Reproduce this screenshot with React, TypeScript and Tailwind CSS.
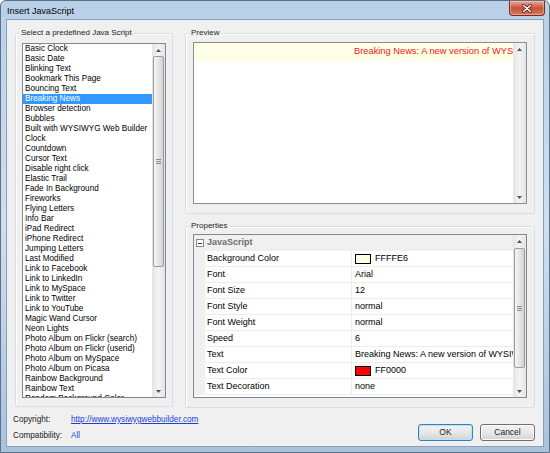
import React from "react";

const scripts = [
  "Basic Clock",
  "Basic Date",
  "Blinking Text",
  "Bookmark This Page",
  "Bouncing Text",
  "Breaking News",
  "Browser detection",
  "Bubbles",
  "Built with WYSIWYG Web Builder",
  "Clock",
  "Countdown",
  "Cursor Text",
  "Disable right click",
  "Elastic Trail",
  "Fade In Background",
  "Fireworks",
  "Flying Letters",
  "Info Bar",
  "iPad Redirect",
  "iPhone Redirect",
  "Jumping Letters",
  "Last Modified",
  "Link to Facebook",
  "Link to LinkedIn",
  "Link to MySpace",
  "Link to Twitter",
  "Link to YouTube",
  "Magic Wand Cursor",
  "Neon Lights",
  "Photo Album on Flickr (search)",
  "Photo Album on Flickr (userid)",
  "Photo Album on MySpace",
  "Photo Album on Picasa",
  "Rainbow Background",
  "Rainbow Text",
  "Random Background Color",
];

const properties: { name: string; value: string; swatch?: string }[] = [
  { name: "Background Color", value: "FFFFE6", swatch: "bg-[#ffffe6]" },
  { name: "Font", value: "Arial" },
  { name: "Font Size", value: "12" },
  { name: "Font Style", value: "normal" },
  { name: "Font Weight", value: "normal" },
  { name: "Speed", value: "6" },
  { name: "Text", value: "Breaking News: A new version of WYSIWYG Web Builder is available!" },
  { name: "Text Color", value: "FF0000", swatch: "bg-[#ff0000]" },
  { name: "Text Decoration", value: "none" },
];

function Arrow({ up }: { up?: boolean }) {
  return (
    <svg width="5" height="3" viewBox="0 0 5 3" className="block">
      <path d={up ? "M0 3 L2.5 0 L5 3 Z" : "M0 0 L2.5 3 L5 0 Z"} fill="#505050" />
    </svg>
  );
}

function ScrollBar({ thumb }: { thumb?: string }) {
  return (
    <div className="w-[13px] shrink-0 flex flex-col bg-gradient-to-r from-[#e4e4e4] via-[#f3f3f3] to-[#e4e4e4]">
      <div className="h-[12px] flex items-center justify-center">
        <Arrow up />
      </div>
      <div className="flex-1 flex flex-col">
        {thumb && (
          <div
            className={`mx-[1px] rounded-[2px] border border-[#9c9c9c] bg-gradient-to-r from-[#f6f6f6] via-[#e6e6e6] to-[#d2d2d2] flex items-center justify-center ${thumb}`}
          >
            <div className="flex flex-col gap-[1px]">
              <div className="w-[5px] h-px bg-[#8c8c8c]" />
              <div className="w-[5px] h-px bg-[#8c8c8c]" />
              <div className="w-[5px] h-px bg-[#8c8c8c]" />
            </div>
          </div>
        )}
      </div>
      <div className="h-[12px] flex items-center justify-center">
        <Arrow />
      </div>
    </div>
  );
}

function Group({ label, className, children }: { label: string; className: string; children: React.ReactNode }) {
  return (
    <div className={`relative border border-[#d5dfe5] rounded-[2px] shadow-[inset_1px_1px_0_#ffffff] ${className}`}>
      <span className="absolute -top-[6px] left-[3px] px-[2px] bg-[#f0f0f0] text-[8px] leading-[10px] text-[#1e1e1e]">
        {label}
      </span>
      {children}
    </div>
  );
}

function CloseButton() {
  return (
    <div className="w-[36px] h-[15px] rounded-b-[4px] border border-t-0 border-[#7a2b22] bg-gradient-to-b from-[#e9a999] via-[#c8513a] to-[#d9795e] shadow-[inset_0_0_0_1px_rgba(255,210,200,0.45)] flex items-center justify-center">
      <svg width="10" height="9" viewBox="0 0 10 9">
        <path d="M1.5 1.5 L8.5 7.5 M8.5 1.5 L1.5 7.5" stroke="#5a1d16" strokeWidth="3" strokeLinecap="round" />
        <path d="M1.5 1.5 L8.5 7.5 M8.5 1.5 L1.5 7.5" stroke="#ffffff" strokeWidth="1.6" strokeLinecap="round" />
      </svg>
    </div>
  );
}

function Button({ label, primary }: { label: string; primary?: boolean }) {
  return (
    <div
      className={`w-[55px] h-[17px] rounded-[3px] border flex items-center justify-center text-[8.5px] text-[#1e1e1e] bg-gradient-to-b from-[#f3f3f3] via-[#e8e8e8] to-[#d2d2d2] ${
        primary
          ? "border-[#3c7fb1] shadow-[inset_0_0_0_1px_#b8e2f8]"
          : "border-[#707070] shadow-[inset_0_0_0_1px_#fbfbfb]"
      }`}
    >
      {label}
    </div>
  );
}

export default function App() {
  return (
    <div className="w-[550px] h-[453px] flex flex-col overflow-hidden rounded-t-[6px] border border-[#5d7189] bg-gradient-to-b from-[#b9d0e9] via-[#cfdff1] to-[#a9c2de] font-['Liberation_Sans',Arial,sans-serif]">
      {/* title bar */}
      <div className="h-[18px] shrink-0 flex items-start justify-between pl-[6px] pr-[4px]">
        <span className="mt-[5px] text-[9px] leading-[10px] text-black">Insert JavaScript</span>
        <CloseButton />
      </div>

      {/* client area */}
      <div className="mx-[5px] h-[428px] shrink-0 flex flex-col bg-[#f0f0f0] border border-[#8aa1ba]">
        <div className="flex gap-[12px] pl-[8px] pr-[8px] pt-[13px]">
          <Group label="Select a predefined Java Script" className="w-[158px] h-[374px] pl-[6px] pt-[9px]">
            <div className="w-[144px] h-[355px] border border-[#828790] bg-white flex overflow-hidden">
              <div className="flex-1 overflow-hidden">
                {scripts.map((s) => (
                  <div
                    key={s}
                    className={`h-[10px] leading-[10px] pl-[2px] text-[8.2px] whitespace-nowrap ${
                      s === "Breaking News" ? "bg-[#3399ff] text-white" : "text-black"
                    }`}
                  >
                    {s}
                  </div>
                ))}
              </div>
              <ScrollBar thumb="h-[211px]" />
            </div>
          </Group>

          <div className="w-[350px] flex flex-col gap-[12px]">
            <Group label="Preview" className="h-[181px] pl-[7px] pt-[8px]">
              <div className="w-[334px] h-[162px] border border-[#8a8d96] bg-white flex overflow-hidden">
                <div className="flex-1 overflow-hidden">
                  <div className="h-[18px] bg-[#ffffe6] pl-[160px] flex items-center overflow-hidden">
                    <span className="text-[9.3px] text-[#f01818] whitespace-nowrap">
                      Breaking News: A new version of WYSIWYG Web Builder is available!
                    </span>
                  </div>
                </div>
                <ScrollBar />
              </div>
            </Group>

            <Group label="Properties" className="h-[182px] pl-[7px] pt-[7px]">
              <div className="w-[334px] h-[164px] border border-[#828790] bg-white flex overflow-hidden">
                <div className="flex-1 flex flex-col overflow-hidden text-[9px] text-black">
                  <div className="h-[16px] shrink-0 bg-[#f0f0f0] flex items-center pl-[2px]">
                    <div className="w-[8px] h-[8px] border border-[#888888] bg-white flex items-center justify-center">
                      <div className="w-[4px] h-px bg-[#333333]" />
                    </div>
                    <span className="ml-[3px] font-bold text-[#6d6d6d]">JavaScript</span>
                  </div>
                  {properties.map((p) => (
                    <div key={p.name} className="h-[16px] shrink-0 flex">
                      <div className="w-[11px] bg-[#f0f0f0]" />
                      <div className="w-[147px] border-b border-r border-[#ececec] pl-[2px] flex items-center whitespace-nowrap">
                        {p.name}
                      </div>
                      <div className="flex-1 border-b border-[#ececec] pl-[3px] flex items-center whitespace-nowrap overflow-hidden">
                        {p.swatch && <div className={`w-[16px] h-[10px] border border-black mr-[4px] shrink-0 ${p.swatch}`} />}
                        {p.value}
                      </div>
                    </div>
                  ))}
                </div>
                <ScrollBar thumb="mt-[1px] h-[120px]" />
              </div>
            </Group>
          </div>
        </div>

        {/* footer */}
        <div className="flex justify-between pl-[6px] pr-[8px] mt-[4px]">
          <div className="flex flex-col text-[8.2px] text-[#222222]">
            <div className="h-[16px] flex items-center">
              <span className="w-[58px]">Copyright:</span>
              <span className="text-[#1c3fd6] underline">http://www.wysiwygwebbuilder.com</span>
            </div>
            <div className="h-[16px] flex items-center">
              <span className="w-[58px]">Compatibility:</span>
              <span className="text-[#1c3fd6]">All</span>
            </div>
          </div>
          <div className="flex gap-[7px] mt-[12px]">
            <Button label="OK" primary />
            <Button label="Cancel" />
          </div>
        </div>
      </div>
    </div>
  );
}
